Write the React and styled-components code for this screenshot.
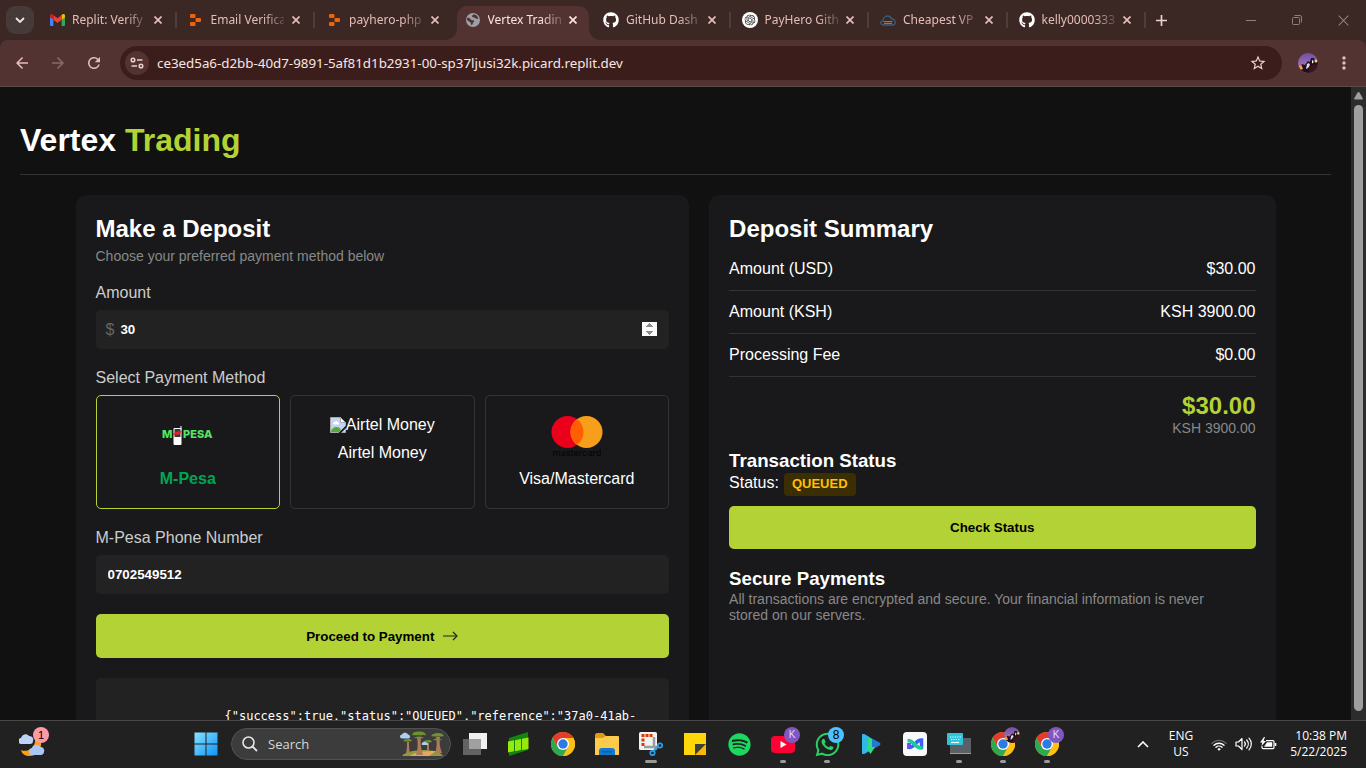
import React, { useState } from "react";
import styled, { createGlobalStyle, css } from "styled-components";
import { FaGithub, FaSpotify, FaWhatsapp } from "react-icons/fa";
import { SiOpenai } from "react-icons/si";
import { MdArrowBack, MdArrowForward, MdRefresh, MdStarBorder, MdMoreVert } from "react-icons/md";

const GlobalStyle = createGlobalStyle`
  *, *::before, *::after { box-sizing: border-box; }
  body { margin: 0; background: #111; }
  h1, h2, h3, p, pre, dl, dd, ul { margin: 0; padding: 0; }
  button { cursor: pointer; }
  svg { display: block; flex: none; }
`;

const Desktop = styled.div`
  display: flex;
  flex-direction: column;
  height: 100vh;
  overflow: hidden;
  font-family: "Open Sans", "Noto Sans", sans-serif;
  background: #111;
`;

/* ---------- Browser frame ---------- */

const TabStrip = styled.div`
  display: flex;
  align-items: stretch;
  height: 40px;
  flex: none;
  background: #3b2724;
`;

const TabSearch = styled.button`
  width: 28px;
  height: 28px;
  margin: 6px 4px 6px 6px;
  padding: 0;
  border: 0;
  border-radius: 9px;
  background: #463a38;
  color: #f5e4e1;
  display: grid;
  place-items: center;
`;

const TabList = styled.ul`
  flex: 1;
  min-width: 0;
  display: grid;
  grid-auto-flow: column;
  grid-auto-columns: 1fr;
  list-style: none;
`;

const Tab = styled.li`
  position: relative;
  display: flex;
  align-items: center;
  min-width: 0;
  padding: 0 13px 0 11px;
  color: ${(p) => (p.$active ? "#fbe5e1" : "#e6bdb8")};
  z-index: ${(p) => (p.$active ? 1 : 0)};

  ${(p) =>
    p.$divider &&
    css`
      &::after {
        content: "";
        position: absolute;
        right: 0;
        top: 12px;
        width: 2px;
        height: 16px;
        background: #4e3d3a;
      }
    `}

  ${(p) =>
    p.$active &&
    css`
      &::before {
        content: "";
        position: absolute;
        z-index: -1;
        inset: 6px 3px 0;
        border-radius: 10px 10px 0 0;
        background: #523331;
      }
    `}
`;

const Flare = styled.i`
  position: absolute;
  bottom: 0;
  width: 10px;
  height: 10px;
  ${(p) => (p.$side === "left" ? "left: -7px;" : "right: -7px;")}
  background: radial-gradient(
    circle at ${(p) => (p.$side === "left" ? "0 0" : "100% 0")},
    transparent 9px,
    #523331 10px
  );
`;

const TabIcon = styled.span`
  width: 16px;
  height: 16px;
  flex: none;
  display: grid;
  place-items: center;
`;

const TabTitle = styled.span`
  flex: 1;
  min-width: 0;
  margin-left: 7px;
  white-space: nowrap;
  font-family: "Noto Sans", sans-serif;
  font-size: 12px;
  line-height: 20px;
  mask-image: linear-gradient(to right, #000 72%, transparent 108%);
`;

const IconButton = styled.button`
  display: grid;
  place-items: center;
  flex: none;
  width: ${(p) => p.$w || 16}px;
  height: ${(p) => p.$h || 16}px;
  margin: 0 0 0 ${(p) => p.$gap || 0}px;
  padding: 0;
  border: 0;
  background: none;
  color: ${(p) => p.$color || "inherit"};
`;

const WindowControls = styled.div`
  display: flex;
  margin-left: 53px;
`;

const ToolbarWrap = styled.div`
  flex: none;
  background: #3b2724;
`;

const Toolbar = styled.div`
  display: flex;
  align-items: center;
  height: 47px;
  padding: 0 12px 1px 10px;
  border-bottom: 1px solid #5c4a46;
  border-radius: 8px 8px 0 0;
  background: #523331;
`;

const AddressBar = styled.div`
  flex: 1;
  min-width: 0;
  display: flex;
  align-items: center;
  height: 34px;
  margin: 0 14px;
  padding: 0 15px 0 5px;
  border-radius: 17px;
  background: #3b1e1b;
`;

const SiteInfo = styled.button`
  display: grid;
  place-items: center;
  flex: none;
  width: 24px;
  height: 24px;
  padding: 0;
  border: 0;
  border-radius: 12px;
  background: #523331;
`;

const UrlInput = styled.input`
  flex: 1;
  min-width: 0;
  height: 24px;
  padding: 0 0 0 8px;
  border: 0;
  outline: 0;
  background: none;
  color: #fbe5e1;
  font-family: "Noto Sans", "Open Sans", sans-serif;
`;

/* ---------- Page ---------- */

const Viewport = styled.main`
  flex: 1;
  min-height: 0;
  display: flex;
  overflow: hidden;
`;

const Page = styled.div`
  flex: 1;
  min-width: 0;
  padding: 20px;
  background: #111;
  color: #fff;
  font-family: Arial, "Liberation Sans", sans-serif;
  font-size: 16px;
  line-height: 18px;
`;

const ScrollTrack = styled.div`
  width: 15px;
  flex: none;
  display: flex;
  flex-direction: column;
  align-items: center;
  gap: 5px;
  padding: 5px 0 9px;
  background: #2c2c2c;
`;

const ScrollThumb = styled.div`
  flex: 1;
  width: 9px;
  border-radius: 5px;
  background: #9f9f9f;
`;

const SiteHeader = styled.header`
  padding: 15px 0;
  margin-bottom: 20px;
  border-bottom: 1px solid #333;
`;

const Brand = styled.h1`
  font-size: 32px;
  line-height: 37px;
  font-weight: bold;
`;

const Accent = styled.span`
  color: #b2d235;
`;

const Columns = styled.div`
  display: grid;
  grid-template-columns: 13fr 12fr;
  gap: 20px;
  max-width: 1200px;
  margin: 0 auto;
`;

const Card = styled.section`
  min-width: 0;
  padding: 20px;
  border-radius: 10px;
  background: #19191b;
`;

const CardTitle = styled.h2`
  margin-bottom: 5px;
  font-size: 24px;
  line-height: 28px;
`;

const Muted = styled.p`
  color: #888;
  font-size: 14px;
  line-height: 16px;
`;

const Field = styled.div`
  margin-top: 20px;
`;

const Label = styled.label`
  display: block;
  margin-bottom: 8px;
  color: #ccc;
`;

const InputBox = styled.div`
  display: flex;
  align-items: center;
  height: 39px;
  padding: 0 12px 0 ${(p) => (p.$prefixed ? 10 : 12)}px;
  border-radius: 5px;
  background: #222;
`;

const Currency = styled.span`
  margin-right: 6px;
  color: #666;
`;

const TextInput = styled.input`
  flex: 1;
  min-width: 0;
  padding: 0;
  border: 0;
  outline: 0;
  background: none;
  color: #fff;
  font-family: inherit;
  font-weight: bold;

  &::-webkit-inner-spin-button {
    opacity: 1;
  }
`;

const Methods = styled.div`
  display: grid;
  grid-template-columns: repeat(3, 1fr);
  gap: 10px;
`;

const Method = styled.button`
  display: flex;
  flex-direction: column;
  align-items: center;
  gap: 10px;
  height: 114px;
  padding: 20px 10px;
  border: 1px solid ${(p) => (p.$selected ? "#b2d235" : "#333")};
  border-radius: 5px;
  background: none;
  color: ${(p) => (p.$selected ? "#00a651" : "#fff")};
  font-family: inherit;
  font-size: 16px;
  line-height: 18px;
  font-weight: ${(p) => (p.$selected ? "bold" : "normal")};
`;

const MissingImage = styled.span`
  display: flex;
  align-items: center;
`;

const PrimaryButton = styled.button`
  display: flex;
  align-items: center;
  justify-content: center;
  gap: 8px;
  width: 100%;
  height: ${(p) => p.$h || 44}px;
  margin-top: ${(p) => p.$gap || 20}px;
  border: 0;
  border-radius: 5px;
  background: #b2d235;
  color: #000;
  font-family: inherit;
  font-weight: bold;
`;

const ResponseBox = styled.pre`
  margin-top: 20px;
  padding: 30px 20px 30px 129px;
  min-height: 120px;
  border-radius: 5px;
  background: #222;
  color: #fff;
  font-family: "DejaVu Sans Mono", monospace;
  font-size: 12px;
  line-height: 16px;
  white-space: pre-wrap;
`;

const SummaryRow = styled.div`
  display: flex;
  justify-content: space-between;
  padding: 12px 0;
  border-bottom: 1px solid #333;
`;

const Total = styled.div`
  margin: 15px 0;
  text-align: right;
`;

const TotalAmount = styled.div`
  color: #b2d235;
  font-size: 24px;
  line-height: 28px;
  font-weight: bold;
`;

const SubTitle = styled.h3`
  margin-bottom: 2px;
  line-height: 20px;
`;

const StatusLine = styled.div`
  display: flex;
  align-items: flex-start;
  gap: 5px;
  line-height: 20px;
`;

const Badge = styled.span`
  padding: 3px 8px 4px;
  border-radius: 4px;
  background: #3a2e02;
  color: #ffc107;
  font-size: 13px;
  line-height: 16px;
  font-weight: bold;
`;

const SecureNote = styled.div`
  max-width: 500px;
  margin-top: 20px;
`;

/* ---------- Taskbar ---------- */

const Taskbar = styled.footer`
  flex: none;
  display: flex;
  align-items: center;
  height: 48px;
  padding-bottom: 1px;
  border-top: 1px solid #484848;
  background: #212121;
  color: #fff;
`;

const TaskbarLeft = styled.div`
  width: 184px;
  flex: none;
  padding-left: 10px;
`;

const Apps = styled.nav`
  display: flex;
  align-items: center;
  flex: 1;
`;

const AppButton = styled.button`
  position: relative;
  display: grid;
  place-items: center;
  flex: none;
  width: 44px;
  height: 46px;
  padding: 0;
  border: 0;
  background: none;

  ${(p) =>
    p.$running &&
    css`
      &::after {
        content: "";
        position: absolute;
        bottom: 4px;
        width: ${p.$running === "active" ? 12 : 6}px;
        height: 3px;
        border-radius: 2px;
        background: #9a9a9a;
      }
    `}
`;

const AppBadge = styled.span`
  position: absolute;
  top: 6px;
  right: 5px;
  width: 16px;
  height: 16px;
  border-radius: 8px;
  overflow: hidden;
  background: ${(p) => p.$bg};
  color: ${(p) => p.$fg};
  font-size: ${(p) => p.$size || 10}px;
  line-height: 16px;
  text-align: center;
`;

const SearchBox = styled.label`
  display: flex;
  align-items: center;
  width: 220px;
  height: 32px;
  margin: 0 2px 0 3px;
  padding: 0 6px 0 10px;
  border: 1px solid #515151;
  border-radius: 16px;
  background: #3c3c3c;
`;

const SearchInput = styled.input`
  flex: 1;
  min-width: 0;
  padding: 0 0 0 10px;
  border: 0;
  outline: 0;
  background: none;
  color: #d8d8d8;
  font-family: inherit;
  font-size: 13px;
  &::placeholder {
    color: #d8d8d8;
  }
`;

const Tray = styled.div`
  display: flex;
  align-items: center;
  flex: none;
  padding-right: 19px;
  font-size: 12px;
  line-height: 16px;
`;

const Language = styled.div`
  width: 36px;
  margin: 0 12px 0 8px;
  text-align: center;
`;

const TrayIcons = styled.div`
  display: flex;
  align-items: center;
  gap: 8px;
`;

const Clock = styled.time`
  width: 70px;
  text-align: right;
  white-space: nowrap;
`;

/* ---------- Drawings ---------- */

const GmailIcon = () => (
  <svg width="15" height="12" viewBox="0 0 15 12">
    <path d="M0 2v9a1 1 0 0 0 1 1h2.400V5z" fill="#4285f4" />
    <path d="M15 2v9a1 1 0 0 1-1 1h-2.400V5z" fill="#34a853" />
    <path d="M11.600 1.200V5.800L15 3.200V1.600C15 0 13.200-.5 12.200.5z" fill="#fbbc04" />
    <path d="M0 1.600v1.600l3.400 2.600V1.200L2.800.5C1.800-.5 0 0 0 1.600z" fill="#c5221f" />
    <path d="M3.400 1.200 7.500 4.300l4.100-3.100v4.600L7.500 9 3.400 5.800z" fill="#ea4335" />
  </svg>
);

const ReplitIcon = () => (
  <svg width="11" height="12" viewBox="0 0 11 12" fill="#f26207">
    <rect x="0" y="0" width="5.500" height="4" rx="1" />
    <rect x="5.500" y="4" width="5.500" height="4" rx="1" />
    <rect x="0" y="8" width="5.500" height="4" rx="1" />
  </svg>
);

const GlobeIcon = () => (
  <svg width="16" height="16" viewBox="0 0 16 16">
    <circle cx="8" cy="8" r="7" fill="#9aa0a6" />
    <path d="M2.200 5.800c1.800-.4 2.600.2 3.600 1.600.8 1 2.400.4 3.200 1.200.8 1-.4 1.600-1 2.400-.5.8-.4 1.600-1.200 2.200-1-.4-.6-2-1.400-2.800C4.200 9.400 2.400 9 2 7.600z" fill="#523331" />
    <path d="M8.500 2.200c-.2 1-1.700 1-1.500 2.200.2 1 1.800.6 2.600 1.200.8.800 1.600 1.400 3.800 1.200-.3-2.200-2.200-4.200-4.900-4.600z" fill="#523331" />
  </svg>
);

const OpenAiBadge = () => (
  <svg width="16" height="16" viewBox="0 0 16 16">
    <circle cx="8" cy="8" r="8" fill="#fff" />
    <SiOpenai x="2.500" y="2.500" size={11} color="#222" />
  </svg>
);

const CloudIcon = () => (
  <svg width="16" height="11" viewBox="0 0 16 11" fill="none">
    <path
      d="M3.500 10C1.700 10 .7 9 .7 7.800c0-1.200 1-2 2.200-2C3 3 5 1 7.400 1c2 0 3.600 1.200 4.200 3 2-.2 3.700 1 3.700 3 0 1.800-1.300 3-3 3z"
      stroke="#3c5c7c"
      strokeWidth="1.300"
    />
    <path d="M3.500 6.500h9M4 8.300h8" stroke="#a8762b" strokeWidth="1.200" />
  </svg>
);

const CloseIcon = ({ size = 8, stroke = 1.7 }) => (
  <svg width={size} height={size} viewBox="0 0 8 8" stroke="currentColor" strokeWidth={stroke} fill="none">
    <path d="M.5.5l7 7M7.500.5l-7 7" />
  </svg>
);

const AvatarPicture = ({ size = 20 }) => (
  <svg width={size} height={size} viewBox="0 0 20 20">
    <defs>
      <clipPath id="avatar-round">
        <circle cx="10" cy="10" r="10" />
      </clipPath>
      <linearGradient id="avatar-sky" x1="0" y1="0" x2="0" y2="1">
        <stop offset="0" stopColor="#6f50a6" />
        <stop offset=".6" stopColor="#9a6fb0" />
      </linearGradient>
    </defs>
    <g clipPath="url(#avatar-round)">
      <rect width="20" height="20" fill="url(#avatar-sky)" />
      <path d="M0 16l4-5 3 1 3-4 2 1 1-4 3 0 1 3 3-1v14H0z" fill="#21101c" />
      <path d="M1 13l2.500-1 1.500 4-3 1z" fill="#f0a04b" />
      <path d="M9 11l2-1 1 2-2 3-2 1z" fill="#e9d8e8" />
      <path d="M14 8l1-1.500.5 3-1.500 1z" fill="#fff" />
      <circle cx="18" cy="8" r="1.500" fill="#f6d58a" />
      <path d="M11 14l6-3 3 3v6h-9z" fill="#3a1519" />
    </g>
  </svg>
);

const MpesaLogo = () => (
  <svg width="54" height="44" viewBox="0 0 54 44" role="img" aria-label="M-Pesa">
    <g fill="#4fe860" fontFamily="Inter, sans-serif" fontWeight="800" fontSize="11">
      <text x="1" y="22">M</text>
      <text x="22" y="22">PESA</text>
    </g>
    <rect x="12.500" y="12" width="8" height="17" rx="1" fill="#fff" />
    <path d="M19.500 10h1v4h-1z" fill="#fff" />
    <rect x="13.500" y="13" width="6" height="8" fill="#3a3a3a" />
    <path d="M11.500 19c2-3 5-4 9-4-1 2-1 3-3 3.500-2 .6-4 .2-6 .5z" fill="#e8202a" />
  </svg>
);

const MastercardLogo = () => (
  <svg width="52" height="44" viewBox="0 0 52 44" role="img" aria-label="Mastercard">
    <circle cx="16.500" cy="16" r="16" fill="#eb001b" />
    <circle cx="35.500" cy="16" r="16" fill="#f79e1b" />
    <path d="M26 3.100a16 16 0 0 1 0 25.800 16 16 0 0 1 0-25.800z" fill="#ff5f00" />
    <text x="26" y="40" textAnchor="middle" fontFamily="Inter, sans-serif" fontSize="9" fontWeight="500" fill="#050505">
      mastercard
    </text>
  </svg>
);

const BrokenImageIcon = () => (
  <svg width="16" height="16" viewBox="0 0 16 16">
    <path d="M.5.5h10l5 5v10H.5z" fill="#c4d4f3" stroke="#a9a9a9" />
    <path d="M3 6.500a1.500 1.500 0 0 1 1.500-1.500 2 2 0 0 1 3.700.5A1 1 0 0 1 8 7.500H3.500z" fill="#fff" />
    <path d="M1 15c0-3 3-5 5.500-5S10 11 11 13l-2 2z" fill="#55a83a" />
    <path d="M10.500.5v5h5z" fill="#fff" stroke="#a9a9a9" />
    <path d="M16 8.500 8.500 16h2.500L16 11z" fill="#19191b" />
  </svg>
);

const ThinArrow = () => (
  <svg width="16" height="12" viewBox="0 0 16 12" fill="none" stroke="#222">
    <path d="M1 6h13.500" />
    <path d="M11 2l4 4-4 4" strokeWidth="1.200" />
  </svg>
);

const WeatherIcon = () => (
  <svg width="26" height="24" viewBox="0 0 26 24">
    <path d="M21 7c3 5 0 17-10 17-5 0-8-2-9-6 6 3 15-2 14-11z" fill="#f9a01b" />
    <path d="M3 12a3 3 0 0 1-1-6c1-4 6-5 8-2 3 0 5 2 4 5 0 2-1 3-3 3z" fill="#bcd3f7" />
    <path d="M14 23a3.500 3.500 0 0 1-1-7c1-4 7-4 8-1 3 0 5 2 4 5 0 2-2 3-3 3z" fill="#a9c6f5" />
  </svg>
);

const WindowsIcon = () => (
  <svg width="24" height="24" viewBox="0 0 24 24">
    <defs>
      <linearGradient id="win" gradientUnits="userSpaceOnUse" x1="0" y1="0" x2="24" y2="24">
        <stop offset="0" stopColor="#8be4ff" />
        <stop offset="1" stopColor="#0a92f5" />
      </linearGradient>
    </defs>
    <path d="M.5.5h11v11H.5zM12.500.5h11v11h-11zM.5 12.500h11v11H.5zM12.500 12.500h11v11h-11z" fill="url(#win)" />
  </svg>
);

const MagnifierIcon = () => (
  <svg width="16" height="16" viewBox="0 0 16 16" fill="none" stroke="#e6e6e6">
    <circle cx="6.500" cy="6.500" r="5.500" strokeWidth="1.600" />
    <path d="M10.500 10.500 15 15" strokeWidth="1.800" />
  </svg>
);

const BaobabPicture = () => (
  <svg width="44" height="26" viewBox="0 0 44 26">
    <path d="M2 25c2-4 14-6 22-6s17 2 19 6z" fill="#8d9a3f" />
    <path d="M10 25c4-4 14-5 26-5l-7 5z" fill="#e3a862" />
    <path d="M16 24c2-6 2-12 1-18h4c-1 6 0 12 2 18zM35 22c2-6 2-11 1-16h4c-1 6 0 11 2 16zM6 22c1-4 1-7 1-11h2c0 4 0 7 1 11zM27 20v-8h2v8z" fill="#b07a58" />
    <path d="M12 4c1-3 4-3.500 7-3.500S25 1 26 4c-2 .6-3-.4-5 .4-3-.6-6 .4-9-.4zM14 7c2-2 8-2 10 0-3 .6-7 .6-10 0zM31 5c1-2 4-3 7-3s5 1 6 3c-3 .8-9 .8-13 0zM33 9c2-2 7-2 9 0-3 .6-6 .6-9 0zM3 10c1-2 8-3 9 0-3 .8-6 .8-9 0zM23 11c1-2 8-3 9 0-3 .8-6 .8-9 0z" fill="#6f9230" />
    <path d="M2 7.500a2 2 0 0 1 0-4c1-2.500 5-2.500 6 0 2 0 3 3 1 4zM22 14c-1-1 0-3 2-3s4 0 4 3z" fill="#a8d2ee" />
  </svg>
);

const TaskViewIcon = () => (
  <svg width="24" height="24" viewBox="0 0 24 24">
    <rect x="6" y="1" width="18" height="16" fill="#f1f1f1" />
    <rect x="0" y="7" width="18" height="16" fill="#6a6a6a" fillOpacity=".9" />
    <rect x="6" y="7" width="12" height="10" fill="#a0a0a0" />
  </svg>
);

const GreenBoardIcon = () => (
  <svg width="22" height="24" viewBox="0 0 22 24">
    <path d="M1 6 20 0v18L1 24z" fill="#12840f" />
    <path d="M0 9.500l6-1.200v11L0 20.500zM7 8.200l6-1.200v11l-6 1.200zM14 6.800l6.500-1.300v11.500L14 18z" fill="#95ea0c" />
  </svg>
);

const ChromeIcon = () => (
  <svg width="24" height="24" viewBox="0 0 24 24">
    <circle cx="12" cy="12" r="12" fill="#fbc116" />
    <path d="M12 6h10.400A12 12 0 0 0 1.600 6l5.200 9z" fill="#e33b2e" />
    <path d="M1.600 6A12 12 0 0 0 12 24l5.200-9H6.800z" fill="#2da94f" />
    <path d="M17.200 15 12 24A12 12 0 0 0 22.400 6H12z" fill="#fbc116" />
    <circle cx="12" cy="12" r="6" fill="#fff" />
    <circle cx="12" cy="12" r="4.700" fill="#2a7be8" />
  </svg>
);

const FolderIcon = () => (
  <svg width="24" height="22" viewBox="0 0 24 22">
    <path d="M0 2C0 1 1 0 2 0h6l3 3h-1L8 6H0z" fill="#e29a10" />
    <path d="M0 5h8l2-2h13a1 1 0 0 1 1 1v18H0z" fill="#fccb4c" />
    <path d="M4 22v-4a3 3 0 0 1 3-3h10a3 3 0 0 1 3 3v4z" fill="#1379ce" />
    <path d="M7 18h10v1.500H7z" fill="#0b5fae" />
  </svg>
);

const SnipIcon = () => (
  <svg width="24" height="24" viewBox="0 0 24 24" fill="none">
    <rect x="0" y="0" width="18" height="18" rx="1.500" fill="#f2f2f2" />
    <path d="M2.500 3.500h11M2.500 8h3M2.500 12.500h3" stroke="#d83b01" strokeWidth="3" strokeDasharray="3 1" />
    <path d="M15 5v10M5 15h10l4 0" stroke="#9a9da1" strokeWidth="2.500" />
    <circle cx="21" cy="13.500" r="2.200" stroke="#2a9fe8" strokeWidth="1.800" />
    <circle cx="13.500" cy="21" r="2.200" stroke="#2a9fe8" strokeWidth="1.800" />
    <path d="M19 15l-3 2-1 2" stroke="#2a9fe8" strokeWidth="1.800" />
  </svg>
);

const StickyIcon = () => (
  <svg width="22" height="22" viewBox="0 0 22 22">
    <path d="M0 0h22v22H0z" fill="#ffd60a" />
    <path d="M22 11v11H11z" fill="#f6b900" />
    <path d="M11 11h11L11 22z" fill="#3e3e3e" />
  </svg>
);

const YouTubeIcon = () => (
  <svg width="24" height="17" viewBox="0 0 24 17">
    <rect width="24" height="17" rx="4" fill="#ff0033" />
    <path d="M9.500 5v7l6-3.500z" fill="#fff" />
  </svg>
);

const PlayDownloadIcon = () => (
  <svg width="20" height="22" viewBox="0 0 20 22">
    <path d="M1 2.500C1 1 2 .5 3.500 1.300l15 8.200c1.300.8 1.300 2.200 0 3L3.500 20.700C2 21.500 1 21 1 19.500z" fill="#2378d8" />
    <path d="M1 2.500C1 1 2 .5 3.500 1.300L8 4v14l-4.500 2.700C2 21.500 1 21 1 19.500z" fill="#31b8e8" />
    <path d="M7 4l4 2v8h3l-4.500 7L5 14h2z" fill="#2de07c" />
  </svg>
);

const MWaveIcon = () => (
  <svg width="24" height="24" viewBox="0 0 24 24" fill="none">
    <rect width="24" height="24" rx="4" fill="#f8f9fb" />
    <path d="M6 17v-6" stroke="#7a4cf5" strokeWidth="4" />
    <path d="M6 15.500c3 0 5-2 6.500-4S15.500 8 18.500 8v9" stroke="#3a62f7" strokeWidth="3.500" />
    <path d="M4.500 8.500c4 0 5.500 2 7.500 4.200s3.500 3.300 7.500 3.300" stroke="#1fc8a0" strokeWidth="3.500" />
  </svg>
);

const KeyboardWindowIcon = () => (
  <svg width="24" height="22" viewBox="0 0 24 22">
    <rect x="3" y="5" width="21" height="16" fill="#5b6066" />
    <rect x="3" y="20" width="21" height="1" fill="#9aa0a6" />
    <rect x="0" y="0" width="16" height="12" rx="1" fill="#2fc3dc" />
    <path d="M3 4h11M4 6.500h9" stroke="#fff" strokeWidth="1.200" strokeDasharray="1.200 1.200" />
    <path d="M4 9.500h8" stroke="#fff" strokeWidth="1.200" />
  </svg>
);

const WifiIcon = () => (
  <svg width="16" height="13" viewBox="0 0 16 13" fill="none" strokeWidth="1.400" strokeLinecap="round">
    <path d="M1 5.200a10 10 0 0 1 14 0" stroke="#666" />
    <path d="M3 7.300a7 7 0 0 1 10 0M5 9.300a4.300 4.300 0 0 1 6 0" stroke="#fff" />
    <circle cx="8" cy="11.300" r="1" fill="#fff" stroke="#fff" strokeWidth=".6" />
  </svg>
);

const VolumeIcon = () => (
  <svg width="17" height="14" viewBox="0 0 17 14" fill="none" stroke="#fff" strokeWidth="1.200" strokeLinecap="round" strokeLinejoin="round">
    <path d="M1 5v4h2.500L7 12.500v-11L3.500 5z" />
    <path d="M9.500 5a3 3 0 0 1 0 4M11.700 3a6 6 0 0 1 0 8M14 1.200a8.500 8.500 0 0 1 0 11.600" />
  </svg>
);

const BatteryIcon = () => (
  <svg width="17" height="14" viewBox="0 0 17 14">
    <path d="M6 3.600h7a1 1 0 0 1 1 1v6a1 1 0 0 1-1 1H3a1 1 0 0 1-1-1V9" fill="none" stroke="#fff" strokeWidth="1.200" />
    <path d="M4 9.800 7 5.300h5.200v4.500z" fill="#fff" />
    <path d="M14.800 6h1.500v3h-1.500z" fill="#fff" />
    <path d="M4 0 0 5.500h2.300L1.500 9 6 4H3.500L5 0z" fill="#fff" />
  </svg>
);

const TABS = [
  { title: "Replit: Verify", icon: <GmailIcon />, divider: true },
  { title: "Email Verifica", icon: <ReplitIcon />, divider: true },
  { title: "payhero-php", icon: <ReplitIcon /> },
  { title: "Vertex Tradin", icon: <GlobeIcon />, active: true },
  { title: "GitHub Dash", icon: <FaGithub size={16} color="#fff" />, divider: true },
  { title: "PayHero Gith", icon: <OpenAiBadge />, divider: true },
  { title: "Cheapest VP", icon: <CloudIcon />, divider: true },
  { title: "kelly0000333", icon: <FaGithub size={16} color="#fff" />, divider: true },
];

const METHODS = [
  { id: "mpesa", name: "M-Pesa", logo: <MpesaLogo /> },
  {
    id: "airtel",
    name: "Airtel Money",
    logo: (
      <MissingImage>
        <BrokenImageIcon />
        Airtel Money
      </MissingImage>
    ),
  },
  { id: "card", name: "Visa/Mastercard", logo: <MastercardLogo /> },
];

const SUMMARY = [
  ["Amount (USD)", "$30.00"],
  ["Amount (KSH)", "KSH 3900.00"],
  ["Processing Fee", "$0.00"],
];

const APPS = [
  { name: "Task view", icon: <TaskViewIcon /> },
  { name: "Boards", icon: <GreenBoardIcon /> },
  { name: "Chrome", icon: <ChromeIcon /> },
  { name: "Files", icon: <FolderIcon /> },
  { name: "Snipping tool", icon: <SnipIcon />, running: "active" },
  { name: "Sticky notes", icon: <StickyIcon /> },
  { name: "Spotify", icon: <FaSpotify size={23} color="#1ed760" /> },
  { name: "YouTube", icon: <YouTubeIcon />, running: "idle", badge: { text: "K", bg: "#7e57c2", fg: "#e4d8f7" } },
  { name: "WhatsApp", icon: <FaWhatsapp size={27} color="#25d366" />, running: "idle", badge: { text: "8", bg: "#4cc2ff", fg: "#000", size: 12 } },
  { name: "Downloader", icon: <PlayDownloadIcon /> },
  { name: "Waves", icon: <MWaveIcon /> },
  { name: "Keyboard", icon: <KeyboardWindowIcon />, running: "idle" },
  { name: "Chrome profile", icon: <ChromeIcon />, running: "idle", badge: { text: <AvatarPicture size={16} />, bg: "none" } },
  { name: "Chrome profile K", icon: <ChromeIcon />, running: "idle", badge: { text: "K", bg: "#7e57c2", fg: "#e4d8f7" } },
];

function BrowserFrame() {
  return (
    <>
      <TabStrip>
        <TabSearch aria-label="Search tabs">
          <svg width="10" height="6" viewBox="0 0 10 6" fill="none" stroke="currentColor" strokeWidth="1.800">
            <path d="M1 1l4 4 4-4" />
          </svg>
        </TabSearch>
        <TabList>
          {TABS.map((t) => (
            <Tab key={t.title} $active={t.active} $divider={t.divider}>
              {t.active && (
                <>
                  <Flare $side="left" />
                  <Flare $side="right" />
                </>
              )}
              <TabIcon>{t.icon}</TabIcon>
              <TabTitle>{t.title}</TabTitle>
              <IconButton $w={12} $gap={6} aria-label={`Close ${t.title}`}>
                <CloseIcon />
              </IconButton>
            </Tab>
          ))}
        </TabList>
        <IconButton $w={28} $h={40} $gap={1} $color="#ecd0cc" aria-label="New tab">
          <svg width="11" height="11" viewBox="0 0 11 11" stroke="currentColor" strokeWidth="1.700">
            <path d="M5.500 0v11M0 5.500h11" />
          </svg>
        </IconButton>
        <WindowControls>
          <IconButton $w={46} $h={40} $color="#8d7f7d" aria-label="Minimize">
            <svg width="10" height="10" viewBox="0 0 10 10" stroke="currentColor">
              <path d="M0 5.500h10" />
            </svg>
          </IconButton>
          <IconButton $w={46} $h={40} $color="#8d7f7d" aria-label="Restore">
            <svg width="10" height="10" viewBox="0 0 10 10" fill="none" stroke="currentColor">
              <rect x=".5" y="2.500" width="7" height="7" rx="1" />
              <path d="M2.500.5h5.500a1.500 1.500 0 0 1 1.500 1.500v5.500" />
            </svg>
          </IconButton>
          <IconButton $w={46} $h={40} $color="#8d7f7d" aria-label="Close window">
            <CloseIcon size={11} stroke={0.8} />
          </IconButton>
        </WindowControls>
      </TabStrip>
      <ToolbarWrap>
        <Toolbar>
          <IconButton $w={24} $h={24} $color="#e6bdb8" aria-label="Back">
            <MdArrowBack size={18} />
          </IconButton>
          <IconButton $w={24} $h={24} $gap={12} $color="#8c6a67" aria-label="Forward">
            <MdArrowForward size={18} />
          </IconButton>
          <IconButton $w={24} $h={24} $gap={12} $color="#e6bdb8" aria-label="Reload">
            <MdRefresh size={18} />
          </IconButton>
          <AddressBar>
            <SiteInfo aria-label="Site information">
              <svg width="14" height="12" viewBox="0 0 14 12" fill="none" stroke="#ecd0cc" strokeWidth="1.500">
                <circle cx="3" cy="3" r="1.800" />
                <path d="M7 3h5.500M1.500 9h5.500" />
                <circle cx="11" cy="9" r="1.800" />
              </svg>
            </SiteInfo>
            <UrlInput
              aria-label="Address"
              spellCheck={false}
              defaultValue="ce3ed5a6-d2bb-40d7-9891-5af81d1b2931-00-sp37ljusi32k.picard.replit.dev"
            />
            <IconButton $w={18} $h={18} $color="#ecd0cc" aria-label="Bookmark this page">
              <MdStarBorder size={18} />
            </IconButton>
          </AddressBar>
          <IconButton $w={24} $h={24} aria-label="Profile">
            <AvatarPicture />
          </IconButton>
          <IconButton $w={20} $h={24} $gap={14} $color="#e6bdb8" aria-label="Menu">
            <MdMoreVert size={20} />
          </IconButton>
        </Toolbar>
      </ToolbarWrap>
    </>
  );
}

function DepositForm() {
  const [method, setMethod] = useState("mpesa");
  return (
    <Card>
      <CardTitle>Make a Deposit</CardTitle>
      <Muted>Choose your preferred payment method below</Muted>
      <Field>
        <Label htmlFor="amount">Amount</Label>
        <InputBox $prefixed>
          <Currency>$</Currency>
          <TextInput id="amount" type="number" defaultValue="30" />
        </InputBox>
      </Field>
      <Field>
        <Label as="div" id="method-label">Select Payment Method</Label>
        <Methods role="group" aria-labelledby="method-label">
          {METHODS.map((m) => (
            <Method
              key={m.id}
              type="button"
              $selected={m.id === method}
              aria-pressed={m.id === method}
              onClick={() => setMethod(m.id)}
            >
              {m.logo}
              <span>{m.name}</span>
            </Method>
          ))}
        </Methods>
      </Field>
      <Field>
        <Label htmlFor="phone">M-Pesa Phone Number</Label>
        <InputBox>
          <TextInput id="phone" type="tel" defaultValue="0702549512" />
        </InputBox>
      </Field>
      <PrimaryButton type="button">
        Proceed to Payment
        <ThinArrow />
      </PrimaryButton>
      <ResponseBox>{'{"success":true,"status":"QUEUED","reference":"37a0-41ab-'}</ResponseBox>
    </Card>
  );
}

function DepositSummary() {
  return (
    <Card>
      <CardTitle>Deposit Summary</CardTitle>
      <dl>
        {SUMMARY.map(([label, value]) => (
          <SummaryRow key={label}>
            <dt>{label}</dt>
            <dd>{value}</dd>
          </SummaryRow>
        ))}
      </dl>
      <Total>
        <TotalAmount>$30.00</TotalAmount>
        <Muted>KSH 3900.00</Muted>
      </Total>
      <SubTitle>Transaction Status</SubTitle>
      <StatusLine>
        <span>Status:</span>
        <Badge>QUEUED</Badge>
      </StatusLine>
      <PrimaryButton type="button" $h={43} $gap={10}>
        Check Status
      </PrimaryButton>
      <SecureNote>
        <SubTitle>Secure Payments</SubTitle>
        <Muted>
          All transactions are encrypted and secure. Your financial information is never stored on our servers.
        </Muted>
      </SecureNote>
    </Card>
  );
}

function WindowsTaskbar() {
  return (
    <Taskbar>
      <TaskbarLeft>
        <AppButton aria-label="Widgets">
          <WeatherIcon />
          <AppBadge $bg="#ff99a4" $fg="#000" $size={11}>1</AppBadge>
        </AppButton>
      </TaskbarLeft>
      <Apps>
        <AppButton aria-label="Start">
          <WindowsIcon />
        </AppButton>
        <SearchBox>
          <MagnifierIcon />
          <SearchInput placeholder="Search" aria-label="Search" />
          <BaobabPicture />
        </SearchBox>
        {APPS.map((a) => (
          <AppButton key={a.name} aria-label={a.name} $running={a.running}>
            {a.icon}
            {a.badge && (
              <AppBadge $bg={a.badge.bg} $fg={a.badge.fg} $size={a.badge.size}>
                {a.badge.text}
              </AppBadge>
            )}
          </AppButton>
        ))}
      </Apps>
      <Tray>
        <IconButton $w={24} $h={24} $color="#fff" aria-label="Show hidden icons">
          <svg width="12" height="7" viewBox="0 0 12 7" fill="none" stroke="currentColor" strokeWidth="1.600">
            <path d="M1 6l5-5 5 5" />
          </svg>
        </IconButton>
        <Language>
          ENG
          <br />
          US
        </Language>
        <TrayIcons>
          <WifiIcon />
          <VolumeIcon />
          <BatteryIcon />
        </TrayIcons>
        <Clock>
          10:38 PM
          <br />
          5/22/2025
        </Clock>
      </Tray>
    </Taskbar>
  );
}

export default function App() {
  return (
    <>
      <GlobalStyle />
      <Desktop>
        <BrowserFrame />
        <Viewport>
          <Page>
            <SiteHeader>
              <Brand>
                Vertex <Accent>Trading</Accent>
              </Brand>
            </SiteHeader>
            <Columns>
              <DepositForm />
              <DepositSummary />
            </Columns>
          </Page>
          <ScrollTrack aria-hidden="true">
            <svg width="9" height="8" viewBox="0 0 9 8">
              <path d="M4.500 0c.5 0 .8.3 1 .6l3.200 5.600c.4.800 0 1.300-.7 1.300H1C.3 7.500-.1 7 .3 6.200L3.500.6c.2-.3.5-.6 1-.6z" fill="#9f9f9f" />
            </svg>
            <ScrollThumb />
          </ScrollTrack>
        </Viewport>
        <WindowsTaskbar />
      </Desktop>
    </>
  );
}
